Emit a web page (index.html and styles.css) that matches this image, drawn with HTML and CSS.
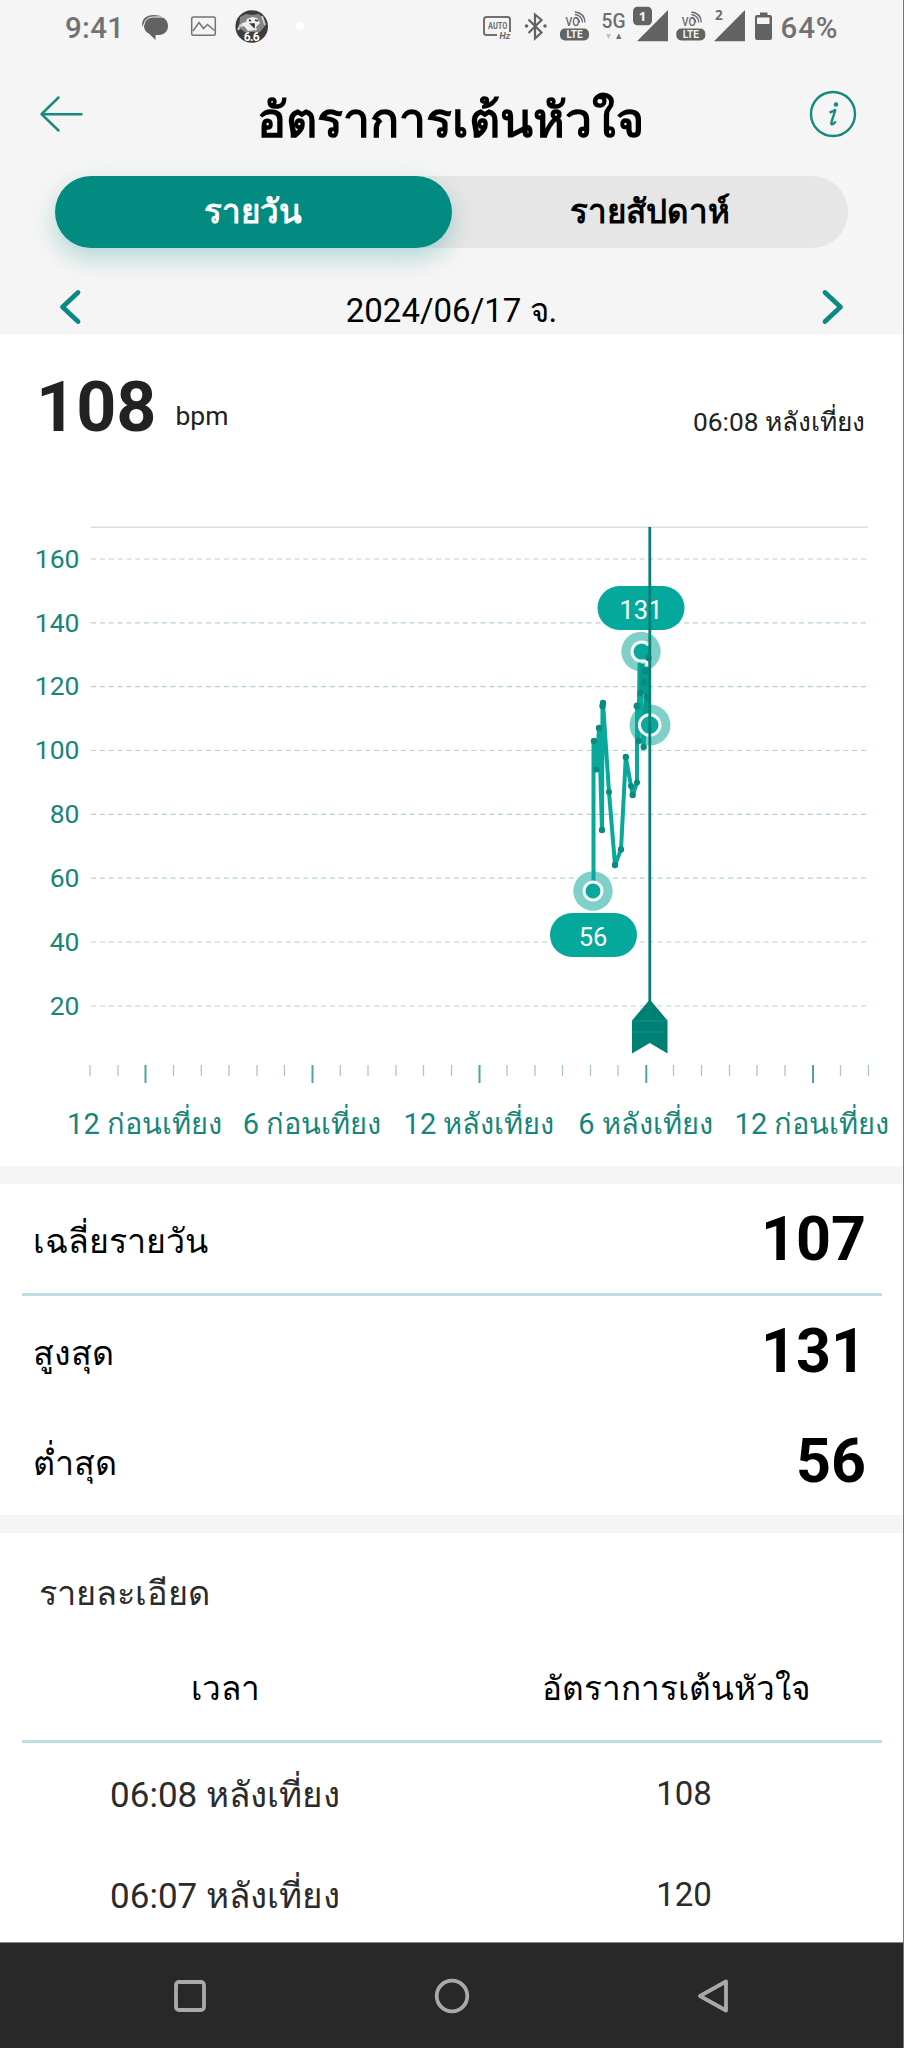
FILE: index.html
```
<!DOCTYPE html>
<html lang="th">
<head>
<meta charset="utf-8">
<title>อัตราการเต้นหัวใจ</title>
<link rel="stylesheet" href="styles.css">
</head>
<body>
<div class="screen">
  <header class="head">
    <div class="status">
      <svg width="452" height="56" viewBox="0 0 452 56">
        <text class="status-text" x="65" y="38.3" textLength="59">9:41</text>
        <path d="M142.500 27c-2-8 4-12 11-12 5 0 8 1 9 2-10-1-17 2-20 10z" fill="#6a6a6a"/>
        <path d="M144 26c0-6 4.500-9.500 10-9.500h4c6 0 10 4 10 9.500s-4 9-9 9h-3.500V40l-6-6c-3.500-1.500-5.500-4.500-5.500-8z" fill="#626262"/>
        <path d="M144 25c1-6 5-8 10-8h9" fill="none" stroke="#f5f5f5" stroke-width="1"/>
        <rect x="191.700" y="17" width="23.600" height="18.200" rx="1.500" fill="none" stroke="#747474" stroke-width="1.500"/>
        <path d="M193 31l6-8.500 4.500 6 4-4 7 6" fill="none" stroke="#747474" stroke-width="1.500"/>
        <circle cx="251.700" cy="26.500" r="16.300" fill="#3d3d3d"/>
        <path d="M240 17l6-3 6 1 7-1 5 5 1 7-5 6H245l-6-4z" fill="#858585"/>
        <path d="M247 19l5-2 5 1 3 5-4 4 1 3-9 1-4-5-3 1 1-4 4-1z" fill="#eee"/>
        <path d="M249 20l2 1M255 20l3 1M251 24h3v3z" fill="#333" stroke="#333" stroke-width="1.500"/>
        <path d="M241 24l-3 6M262 16l3 9" stroke="#ccc" stroke-width="2"/>
        <text x="251.700" y="40.500" text-anchor="middle" font-size="12" font-weight="700" fill="#fff" textLength="16">6.6</text>
        <circle cx="300" cy="26" r="4" fill="#fff"/>
      </svg>
      <svg width="452" height="56" viewBox="452 0 452 56">
        <path d="M497 35h-10.500a2.500 2.500 0 0 1-2.500-2.500V19.500a2.500 2.500 0 0 1 2.500-2.500h21a2.500 2.500 0 0 1 2.500 2.500V32" fill="none" stroke="#707070" stroke-width="2"/>
        <text x="488" y="29.300" font-size="9.500" font-weight="700" fill="#707070" textLength="19.500" lengthAdjust="spacingAndGlyphs">AUTO</text>
        <text x="499.500" y="39" font-size="9" font-weight="700" font-style="italic" fill="#666">Hz</text>
        <path d="M528.500 19.500l13 13-6.500 6V14.500l6.500 5.500-13 13" fill="none" stroke="#636363" stroke-width="2.200"/>
        <circle cx="526.500" cy="26" r="1.800" fill="#636363"/><circle cx="545" cy="26" r="1.800" fill="#636363"/>
        <g id="volte">
          <text x="565.500" y="25.500" font-size="12" font-weight="500" fill="#6a6a6a" textLength="14" lengthAdjust="spacingAndGlyphs">VO</text>
          <path d="M575 17.500q4 1 4.500 5M575 14.500q7 1 7.500 8M575 12q9.500 1 10 10.500" fill="none" stroke="#6a6a6a" stroke-width="1.300"/>
          <rect x="560" y="28.500" width="29" height="12" rx="5" fill="#636363"/>
          <text x="574.500" y="38" text-anchor="middle" font-size="10" font-weight="700" fill="#f5f5f5">LTE</text>
        </g>
        <text x="601.500" y="28" font-size="19.500" font-weight="500" fill="#707070" textLength="24" lengthAdjust="spacingAndGlyphs">5G</text>
        <path d="M606 34h5l-2.500 5z" fill="#c2c2c2"/>
        <path d="M616 39h5.500l-2.700-5.500z" fill="#707070"/>
        <path d="M637 41.300h31V10z" fill="#636363"/>
        <rect x="632" y="5.800" width="21" height="21" rx="5.500" fill="#f5f5f5"/>
        <rect x="633" y="6.800" width="19" height="18.400" rx="4.500" fill="#636363"/>
        <text x="642.500" y="20.500" text-anchor="middle" font-family="Noto Sans" font-size="13" font-weight="700" fill="#f5f5f5">1</text>
        <use href="#volte" x="116.300"/>
        <text x="715" y="20" font-family="Noto Sans" font-size="13.500" font-weight="700" fill="#6d6d6d">2</text>
        <path d="M714 41.300h31V10z" fill="#636363"/>
        <path d="M755 17a2 2 0 0 1 2-2h3v-2.500h7.500V15h2.500a2 2 0 0 1 2 2v21a2 2 0 0 1-2 2h-13a2 2 0 0 1-2-2z" fill="#636363"/>
        <rect x="757" y="17.500" width="12.500" height="6.500" fill="#f5f5f5"/>
        <text class="status-text" x="780.500" y="38.300" textLength="57">64%</text>
      </svg>
    </div>
    <div class="title-row">
      <svg width="46" height="46" viewBox="0 0 46 46"><path d="M20.500 6.500L3.500 23.200l17 16.300M4 23.200h39.500" fill="none" stroke="#158a7e" stroke-width="2.500" stroke-linecap="round" stroke-linejoin="round"/></svg>
      <h1 class="title">อัตราการเต้นหัวใจ</h1>
      <svg width="48" height="48" viewBox="0 0 48 48"><circle cx="24" cy="24" r="22" fill="none" stroke="#158a7e" stroke-width="2.400"/><circle cx="27" cy="14.500" r="2.200" fill="#158a7e"/><path d="M20.500 22.500q4-1 6-3l-4 12.500q-.8 3 1.200 2.200 1.800-.8 3-3" fill="none" stroke="#158a7e" stroke-width="2.400"/></svg>
    </div>
    <div class="tabs">
      <div class="tab tab-on">รายวัน</div>
      <div class="tab tab-off">รายสัปดาห์</div>
    </div>
    <div class="date-row">
      <svg width="26" height="40" viewBox="0 0 26 40"><path d="M21 5.500L5.500 20 21 34.500" fill="none" stroke="#0b8a84" stroke-width="4.800" stroke-linecap="round" stroke-linejoin="round"/></svg>
      <span class="date">2024/06/17 จ.</span>
      <svg width="26" height="40" viewBox="0 0 26 40"><path d="M5 5.500L20.500 20 5 34.500" fill="none" stroke="#0b8a84" stroke-width="4.800" stroke-linecap="round" stroke-linejoin="round"/></svg>
    </div>
  </header>

  <section class="chart-card">
    <div class="reading">
      <span class="reading-value">108</span>
      <span class="reading-unit">bpm</span>
      <span class="reading-time">06:08 หลังเที่ยง</span>
    </div>
    <svg class="chart" width="904" height="680" viewBox="0 486 904 680">
      <path d="M91 527.300H868" stroke="#dcdfdf" stroke-width="1.500"/>
      <path d="M91 559H868M91 622.800H868M91 686.700H868M91 750.500H868M91 814.300H868M91 878.200H868M91 942H868M91 1006H868" stroke="#b4d3cf" stroke-width="1.200" stroke-dasharray="5 3.850"/>
      <g class="axis" text-anchor="end">
        <text x="79.500" y="567.700">160</text><text x="79.500" y="631.500">140</text><text x="79.500" y="695.300">120</text><text x="79.500" y="759.100">100</text><text x="79.500" y="823">80</text><text x="79.500" y="887">60</text><text x="79.500" y="951">40</text><text x="79.500" y="1015">20</text>
      </g>
      <path d="M90 1065v11M118 1065v11M173.500 1065v11M201.300 1065v11M229 1065v11M257 1065v11M284.500 1065v11M340.300 1065v11M368 1065v11M396 1065v11M423.500 1065v11M451.500 1065v11M507 1065v11M535 1065v11M562.500 1065v11M590.500 1065v11M618 1065v11M673.500 1065v11M701.500 1065v11M729.500 1065v11M757 1065v11M785 1065v11M840.500 1065v11M868.500 1065v11" stroke="#a9c9c6" stroke-width="1.300"/>
      <path d="M145.500 1065v18M312.500 1065v18M479.500 1065v18M646.300 1065v18M813 1065v18" stroke="#4fa3a5" stroke-width="2"/>
      <g class="hours" text-anchor="middle">
        <text x="144.500" y="1133.500">12 ก่อนเที่ยง</text><text x="312" y="1133.500">6 ก่อนเที่ยง</text><text x="479" y="1133.500">12 หลังเที่ยง</text><text x="645.500" y="1133.500">6 หลังเที่ยง</text><text x="812" y="1133.500">12 ก่อนเที่ยง</text>
      </g>
      <circle cx="593" cy="891" r="19.700" fill="#7fd0c8"/>
      <circle cx="641" cy="651.500" r="19.700" fill="#7fd0c8"/>
      <circle cx="650" cy="725" r="20.500" fill="#7fd0c8"/>
      <path d="M593.500 886V741L596.500 769.500 599 728 602 830 602.500 706 603 703 609 792 615 865 621 849.500 625.800 757 631 786 632.700 795 637 782.500V706L638.500 741 639.500 664 643.500 747 647.500 672 648.500 725V658" fill="none" stroke="#08a89a" stroke-width="4" stroke-linejoin="round"/>
      <path d="M639.500 664h9v60h-5v-30h-4.500z" fill="#059a8f"/>
      <path d="M646.500 664v3" stroke="#7fd0c8" stroke-width="4"/>
      <g fill="#0b8a7f">
        <circle cx="594" cy="741" r="3.200"/><circle cx="596.500" cy="769.500" r="3"/><circle cx="599" cy="728" r="3.200"/><circle cx="602" cy="830" r="3.200"/><circle cx="603" cy="703" r="3.200"/><circle cx="602.500" cy="706" r="3.200"/><circle cx="609" cy="792" r="3"/><circle cx="615" cy="865" r="3.200"/><circle cx="621" cy="849.500" r="3.200"/><circle cx="625.800" cy="757" r="3.200"/><circle cx="631" cy="786" r="3"/><circle cx="632.700" cy="795" r="3.200"/><circle cx="637" cy="782.500" r="3"/><circle cx="637" cy="706" r="3.500"/><circle cx="638.500" cy="741" r="3.200"/><circle cx="643.700" cy="747" r="3.200"/><circle cx="640.500" cy="693" r="3.200"/><circle cx="645" cy="671" r="3.200"/><circle cx="644" cy="682" r="3.200"/><circle cx="647" cy="697" r="3.500"/>
      </g>
      <circle cx="593" cy="891" r="9" fill="#08a89a" stroke="#fff" stroke-width="3"/>
      <circle cx="641" cy="651.500" r="9.300" fill="#08a89a"/>
      <path d="M648.500 645a9.500 9.500 0 1 0-6 16h4.500v5" fill="none" stroke="#fff" stroke-width="3"/>
      <circle cx="648.500" cy="658" r="3.200" fill="#0b8a7f"/>
      <rect x="597.500" y="586" width="87" height="44" rx="22" fill="#05a99c"/>
      <rect x="550" y="913" width="87" height="44" rx="22" fill="#05a99c"/>
      <text class="pill" x="641" y="619" text-anchor="middle">131</text>
      <text class="pill" x="593" y="946" text-anchor="middle">56</text>
      <circle cx="649.700" cy="725" r="10.300" fill="#08a89a" stroke="#fff" stroke-width="3"/>
      <path d="M649.800 527v480" stroke="#087f75" stroke-width="2.800"/>
      <path d="M649.800 999.500L667.500 1020.500V1053.500L649.800 1043 632 1053.500V1020.500z" fill="#007f74"/>
      <path d="M632 1021h35.500M632 1032h35.500" stroke="#19938a" stroke-width="1"/>
    </svg>
  </section>

  <section class="stats">
    <div class="stat stat-avg"><span class="label">เฉลี่ยรายวัน</span><span class="value">107</span></div>
    <div class="stat stat-max"><span class="label">สูงสุด</span><span class="value">131</span></div>
    <div class="stat stat-min"><span class="label">ต่ำสุด</span><span class="value">56</span></div>
  </section>

  <section class="details">
    <h2 class="details-title">รายละเอียด</h2>
    <div class="row row-head"><span>เวลา</span><span>อัตราการเต้นหัวใจ</span></div>
    <div class="row"><span class="time">06:08 หลังเที่ยง</span><span class="bpm">108</span></div>
    <div class="row"><span class="time">06:07 หลังเที่ยง</span><span class="bpm">120</span></div>
  </section>

  <nav class="nav">
    <svg width="36" height="36" viewBox="0 0 36 36"><rect x="4" y="4" width="28" height="28" rx="3" fill="none" stroke="#a9a9a9" stroke-width="3.800"/></svg>
    <svg width="36" height="36" viewBox="0 0 36 36"><circle cx="18" cy="18" r="15.300" fill="none" stroke="#a9a9a9" stroke-width="3.800"/></svg>
    <svg width="36" height="36" viewBox="0 0 36 36"><path d="M31 3.500v29L5 18z" fill="none" stroke="#a9a9a9" stroke-width="3.800" stroke-linejoin="round"/></svg>
  </nav>
</div>
</body>
</html>
```
FILE: styles.css
```
* { box-sizing: border-box; }
body { margin: 0; background: #fff; font-family: Roboto, sans-serif; color: #000; }
svg { display: block; flex: none; }
h1, h2 { margin: 0; font-weight: 400; }
.screen { width: 904px; height: 2048px; overflow: hidden; display: flex; flex-direction: column; border-right: 1px solid #777; }

.head { height: 334px; flex: none; background: #f5f5f5; }
.status { display: flex; height: 56px; width: 904px; }
.status-text { font-size: 29.500px; font-weight: 500; fill: #727272; }
.title-row { display: flex; align-items: center; justify-content: space-between; height: 116px; padding: 0 46px 0 38px; }
.title { font-size: 48.300px; font-weight: 700; line-height: 60px; padding: 14px 0 0 8px; }
.tabs { display: flex; height: 72px; margin: 4px 55px 0; border-radius: 36px; background: #e6e6e6; }
.tab { flex: 1; text-align: center; font-size: 33.200px; font-weight: 700; line-height: 72px; }
.tab-on { color: #fff; background: #028b81; border-radius: 36px; box-shadow: 0 10px 24px rgba(2, 139, 129, .28); }
.date-row { display: flex; align-items: flex-start; justify-content: space-between; height: 86px; padding: 39px 57px 0; }
.date { font-size: 33px; line-height: 40px; padding-top: 4px; }

.chart-card { flex: none; height: 832px; }
.reading { display: flex; align-items: flex-start; height: 152px; padding: 31px 38px 0 36px; color: #222; }
.reading-value { font-size: 70px; font-weight: 700; line-height: 84px; }
.reading-unit { font-size: 26.500px; line-height: 84px; margin-left: 19px; padding-top: 9px; }
.reading-time { font-size: 26.300px; line-height: 84px; margin-left: auto; padding-top: 15px; }
.axis { font-size: 26.500px; fill: #16857a; }
.hours { font-size: 29px; fill: #16857a; }
.pill { font-size: 25.500px; fill: #fff; }

.stats { flex: none; height: 367px; border-top: 18px solid #f5f5f5; border-bottom: 18px solid #f5f5f5; }
.stat { display: flex; justify-content: space-between; align-items: center; height: 110px; margin: 0 21px 0 22px; padding: 0 16px 0 11px; }
.stat-avg { height: 112px; border-bottom: 3px solid #bbdfe2; }
.label { font-size: 34px; line-height: 60px; padding-top: 4px; }
.value { font-size: 61px; font-weight: 700; line-height: 72px; }

.details { flex: none; height: 409px; color: #2b2b2b; }
.details-title { font-size: 34.300px; line-height: 50px; padding: 35px 0 0 39px; }
.row { display: grid; grid-template-columns: 406px 512px; height: 101px; align-items: center; justify-content: start; padding-left: 22px; text-align: center; font-size: 35px; line-height: 50px; }
.row-head { height: 125px; margin: 0 21px 0 22px; padding: 20px 0 0; color: #000; border-bottom: 3px solid #bbdfe2; font-size: 33.300px; grid-template-columns: 406px 496px; }
.time { padding-top: 5px; }
.bpm { font-size: 33px; }

.nav { flex: none; height: 106px; display: flex; justify-content: space-between; padding: 35px 172px 0; background: #282828; border-top: 1px solid #888; }
```
